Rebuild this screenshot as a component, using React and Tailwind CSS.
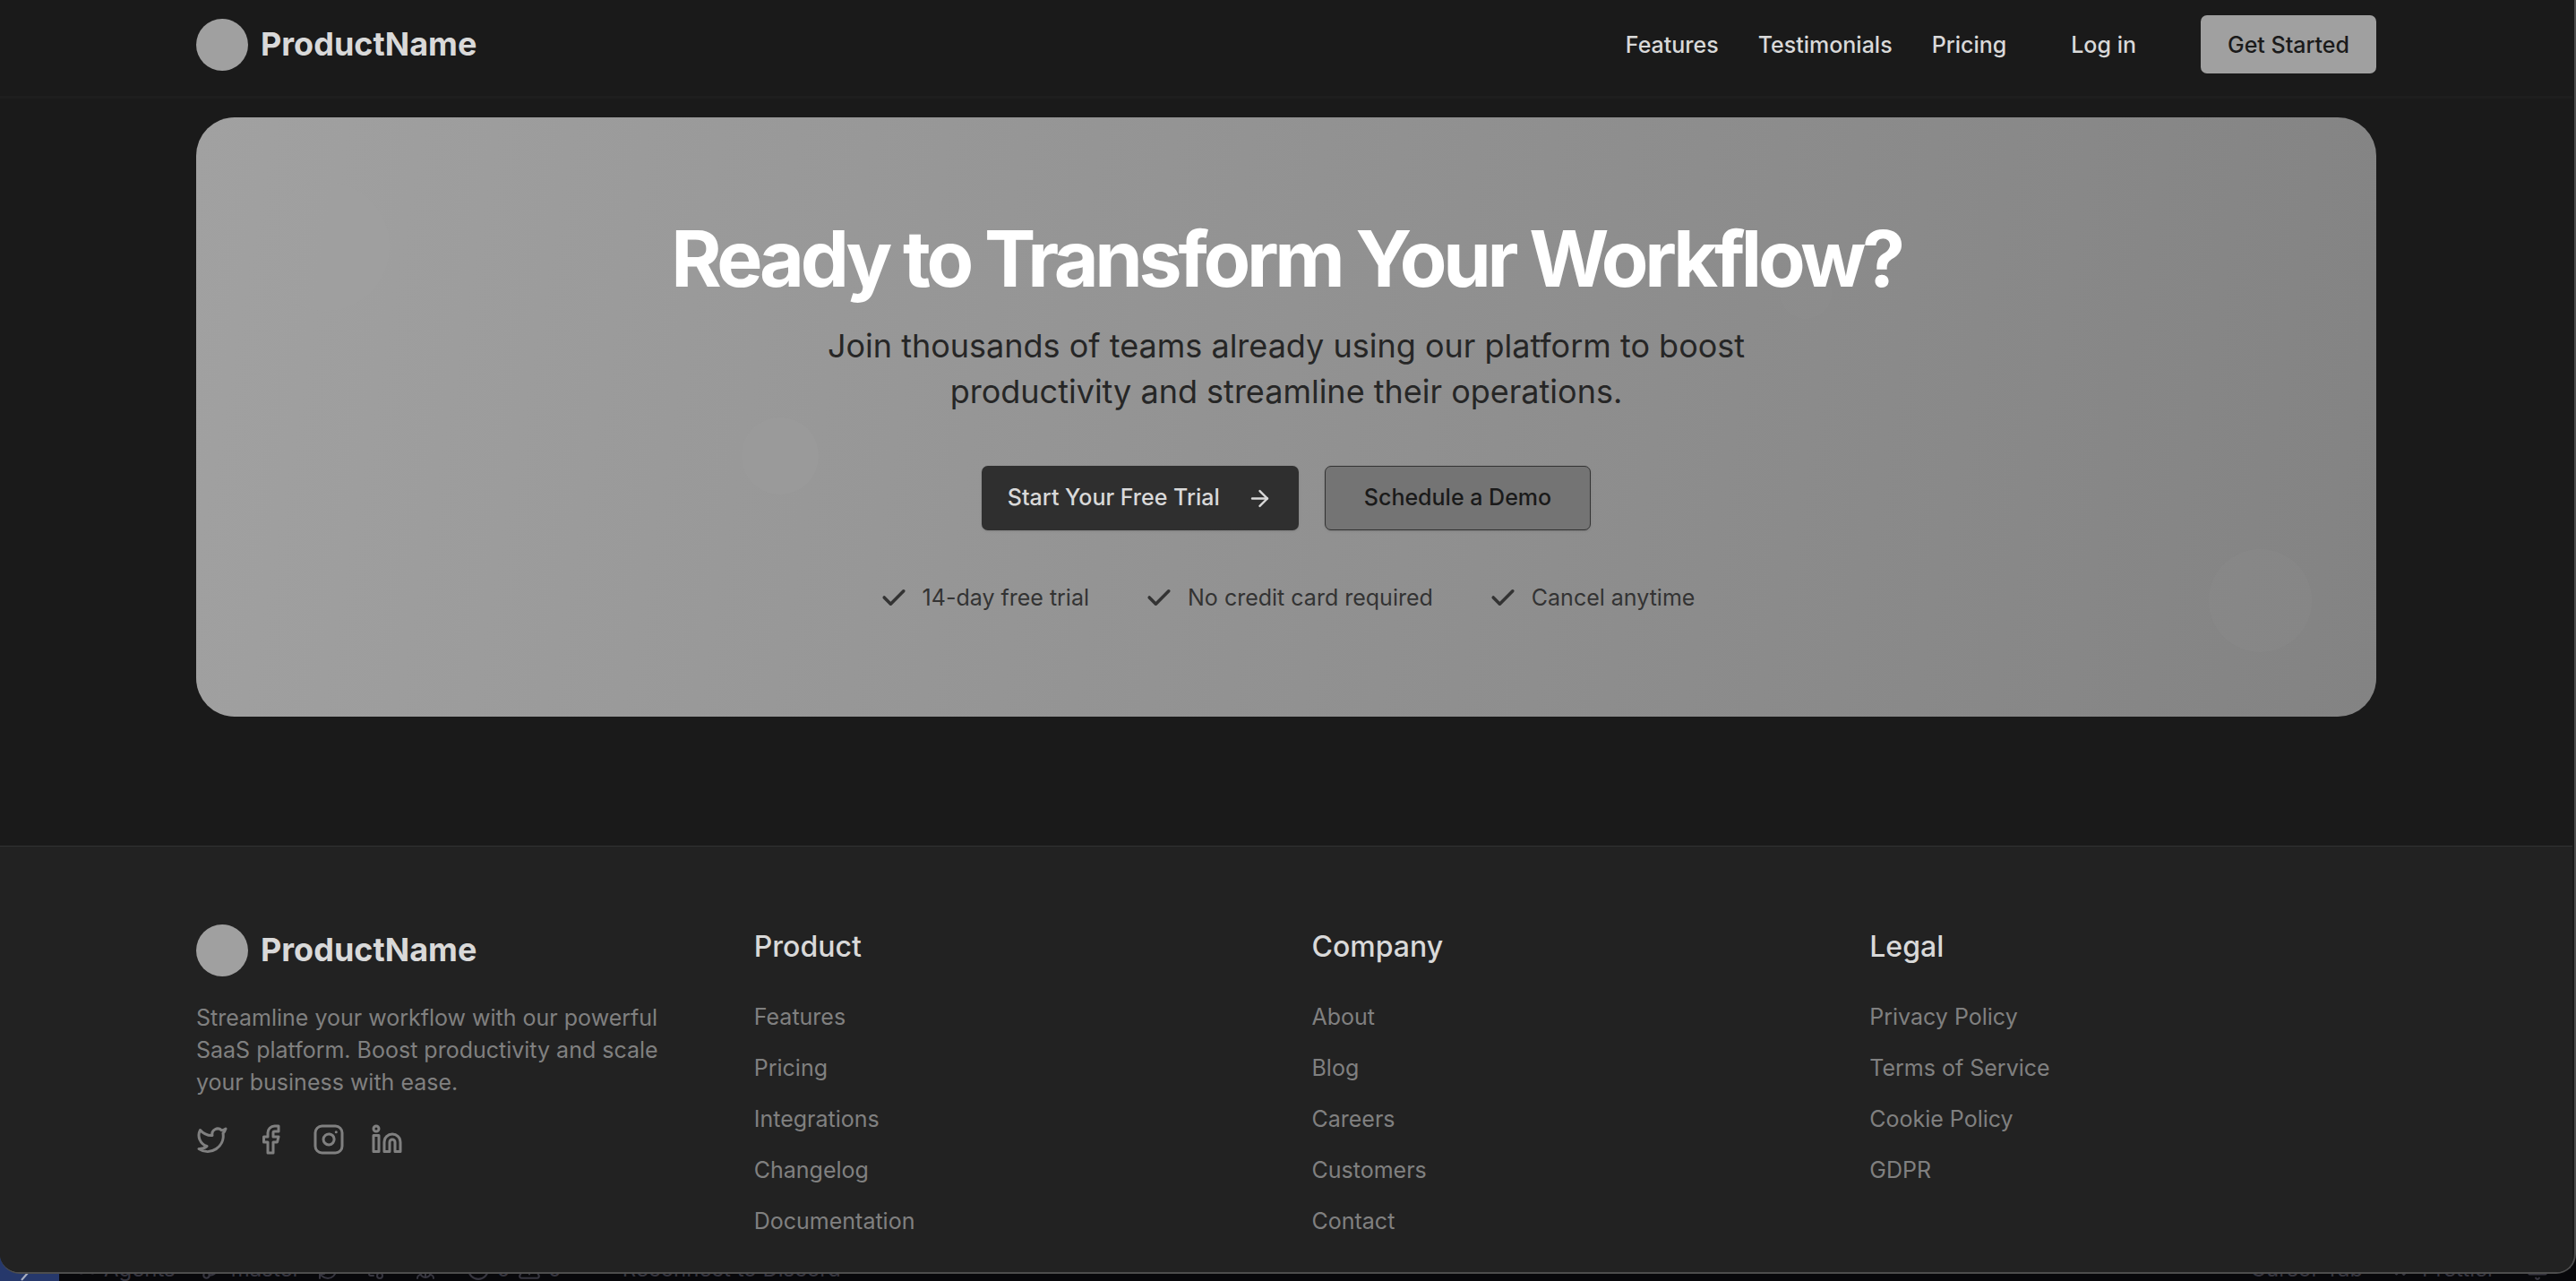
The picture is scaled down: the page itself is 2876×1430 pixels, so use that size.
import {
  ArrowRight,
  Bell,
  Bug,
  CheckCheck,
  CircleX,
  Facebook,
  GitBranch,
  GitCompare,
  Infinity as Loop,
  Instagram,
  Linkedin,
  RefreshCw,
  TriangleAlert,
  Twitter,
} from "lucide-react";

const columns = [
  { title: "Product", links: ["Features", "Pricing", "Integrations", "Changelog", "Documentation"] },
  { title: "Company", links: ["About", "Blog", "Careers", "Customers", "Contact"] },
  { title: "Legal", links: ["Privacy Policy", "Terms of Service", "Cookie Policy", "GDPR"] },
];

const perks = ["14-day free trial", "No credit card required", "Cancel anytime"];

const socials = [
  { label: "Twitter", Icon: Twitter },
  { label: "Facebook", Icon: Facebook },
  { label: "Instagram", Icon: Instagram },
  { label: "LinkedIn", Icon: Linkedin },
];

function CheckMark() {
  return (
    <svg viewBox="0 0 20 20" fill="currentColor" className="size-[36px]" aria-hidden="true">
      <path
        fillRule="evenodd"
        clipRule="evenodd"
        d="M16.707 5.293a1 1 0 010 1.414l-8 8a1 1 0 01-1.414 0l-4-4a1 1 0 011.414-1.414L8 12.586l7.293-7.293a1 1 0 011.414 0z"
      />
    </svg>
  );
}

function Brand() {
  return (
    <a href="#home" className="flex items-center gap-[14px]">
      <span className="size-[58px] rounded-full bg-[#a0a0a0]" />
      <span className="pb-[2px] text-[36px] leading-[50px] font-bold text-[#d9d9d9]">ProductName</span>
    </a>
  );
}

function Header() {
  return (
    <header className="border-b-3 border-[#1e1e1e] pt-[17px] pb-[25px]">
      <div className="mx-auto flex w-full max-w-[2434px] items-center justify-between">
        <Brand />
        <nav className="flex items-center text-[25px] leading-[36px] font-medium text-[#d9d9d9]">
          <div className="flex gap-[44px]">
            <a href="#features">Features</a>
            <a href="#testimonials">Testimonials</a>
            <a href="#pricing">Pricing</a>
          </div>
          <a href="#login" className="mx-[72px]">Log in</a>
          <button className="h-[65px] rounded-[7px] bg-[#a0a0a0] px-[30px] text-[#1a1a1a]">Get Started</button>
        </nav>
      </div>
    </header>
  );
}

function CallToAction() {
  return (
    <section className="relative mx-auto mt-[21px] mb-[144px] flex w-full max-w-[2434px] shrink-0 flex-col items-center overflow-hidden rounded-[43px] bg-linear-100 from-[#a1a1a1] to-[#838383] py-[115px]">
      <span className="absolute top-[72px] left-[72px] size-[144px] rounded-full bg-[#a0a0a0]/60" />
      <span className="absolute top-1/2 left-1/4 size-[86px] rounded-full bg-[#a0a0a0]/30" />
      <span className="absolute top-1/4 right-1/4 size-[58px] rounded-full bg-[#a0a0a0]/10" />
      <span className="absolute right-[72px] bottom-[72px] size-[115px] rounded-full bg-[#a0a0a0]/10" />
      <h2 className="relative text-[86px] leading-[86px] font-bold tracking-tighter text-white">Ready to Transform Your Workflow?</h2>
      <p className="relative mt-[29px] max-w-[1210px] text-center text-[36px] leading-[51px] text-[#262626]">
        Join thousands of teams already using our platform to boost productivity and streamline their operations.
      </p>
      <div className="relative mt-[57px] flex gap-[29px] text-[25px] font-medium">
        <button className="flex h-[72px] items-center gap-[30px] rounded-[7px] bg-[#2f2f2f] px-[29px] text-[#d9d9d9] shadow-sm">
          Start Your Free Trial
          <ArrowRight className="size-[29px]" />
        </button>
        <button className="h-[72px] rounded-[7px] border border-[#333333] bg-[#747474] px-[43px] text-[#1a1a1a] shadow-sm">Schedule a Demo</button>
      </div>
      <ul className="relative mt-[57px] flex gap-[60px] text-[25px] leading-[36px] text-[#333333]">
        {perks.map((perk) => (
          <li key={perk} className="flex items-center gap-[14px]">
            <CheckMark />
            {perk}
          </li>
        ))}
      </ul>
    </section>
  );
}

function Footer() {
  return (
    <footer className="grow border-t border-[#313333] bg-[#222222] pt-[87px]">
      <div className="mx-auto grid w-full max-w-[2434px] grid-cols-4 gap-[57px]">
        <div>
          <Brand />
          <p className="mt-[28px] text-[25px] leading-[36px] text-[#808080]">
            Streamline your workflow with our powerful SaaS platform. Boost productivity and scale your business with ease.
          </p>
          <div className="mt-[28px] flex gap-[29px] text-[#808080]">
            {socials.map(({ label, Icon }) => (
              <a key={label} href={"#" + label} aria-label={label}>
                <Icon className="size-[36px]" />
              </a>
            ))}
          </div>
        </div>
        {columns.map((column) => (
          <div key={column.title}>
            <h3 className="text-[32px] leading-[50px] font-medium text-[#d9d9d9]">{column.title}</h3>
            <ul className="mt-[35px] flex flex-col gap-[21px] text-[25px] leading-[36px] text-[#808080]">
              {column.links.map((link) => (
                <li key={link}>
                  <a href={"#" + link}>{link}</a>
                </li>
              ))}
            </ul>
          </div>
        ))}
      </div>
    </footer>
  );
}

function StatusBar() {
  return (
    <div className="-mt-[36px] flex h-[44px] shrink-0 items-end justify-between overflow-hidden bg-[#08080b] pr-[30px] text-[24px] leading-[26px] whitespace-nowrap text-[#36353f]">
      <div className="flex items-end">
        <div className="flex h-[44px] w-[66px] items-end bg-[#26386b] pl-[22px]">
          <svg viewBox="0 0 12 12" className="size-[12px] text-[#a9afc2]" fill="none" stroke="currentColor" strokeWidth="2">
            <path d="M2 11L9 3" />
          </svg>
        </div>
        <Loop className="ml-[18px] size-[26px]" />
        <span className="ml-[6px]">Agents</span>
        <GitBranch className="ml-[28px] size-[26px]" />
        <span className="ml-[8px]">master</span>
        <RefreshCw className="ml-[18px] size-[24px]" />
        <GitCompare className="ml-[28px] size-[24px]" />
        <Bug className="ml-[33px] size-[24px]" />
        <CircleX className="ml-[34px] size-[26px]" />
        <span className="ml-[8px]">0</span>
        <TriangleAlert className="ml-[8px] size-[26px]" />
        <span className="ml-[8px]">0</span>
        <span className="ml-[68px]">Reconnect to Discord</span>
      </div>
      <div className="flex items-end">
        <span>Cursor Tab</span>
        <CheckCheck className="ml-[30px] size-[26px]" />
        <span className="ml-[10px]">Prettier</span>
        <Bell className="ml-[34px] size-[26px]" />
      </div>
    </div>
  );
}

export default function App() {
  return (
    <div className="flex h-screen flex-col overflow-hidden bg-[#060608] font-[Inter,sans-serif]">
      <div className="relative z-10 mb-[8px] flex min-h-0 grow flex-col overflow-hidden rounded-b-[22px] border-r-2 border-b-2 border-[#4d4d4d] bg-[#1a1a1a] pr-[2px]">
        <Header />
        <CallToAction />
        <Footer />
      </div>
      <div className="-mt-[8px]">
        <StatusBar />
      </div>
    </div>
  );
}
